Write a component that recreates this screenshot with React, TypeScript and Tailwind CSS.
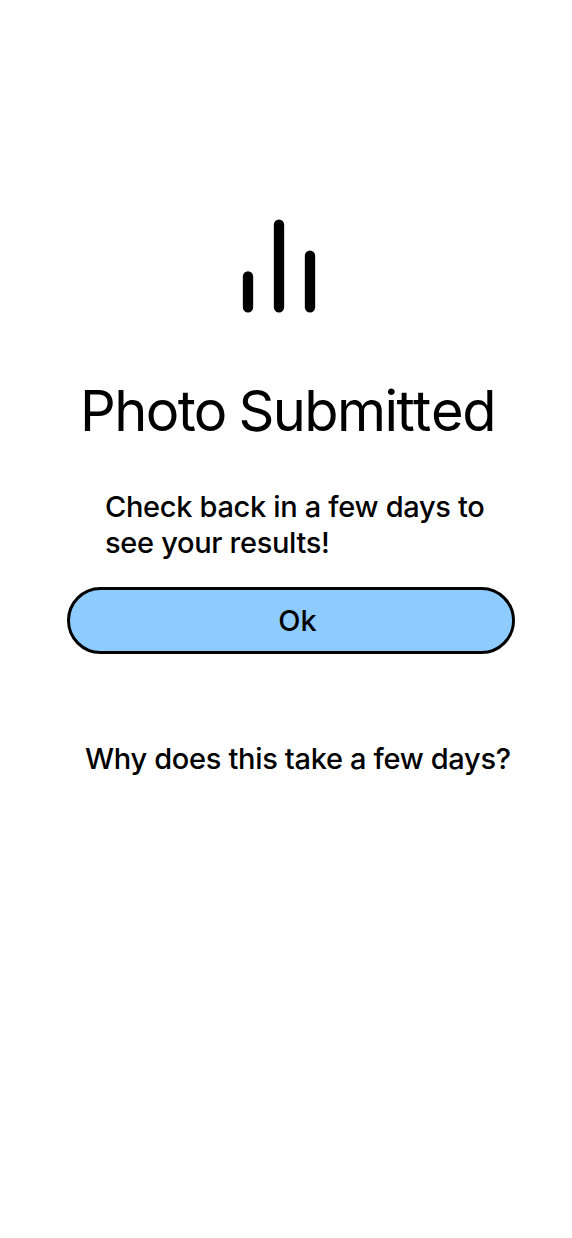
export default function App() {
  return (
    <main className="flex h-[1238px] w-[572px] flex-col items-start bg-white font-['Inter',sans-serif] text-black">
      <svg className="mt-[204px] ml-[217px] size-[124px] shrink-0" viewBox="0 0 24 24" fill="none" stroke="currentColor" strokeWidth="2" strokeLinecap="round">
        <path d="M6 20v-6M12 20V4M18 20V10" />
      </svg>
      <h1 className="mt-[49px] ml-[80px] text-[56px] leading-[68px] tracking-[-1.6px] [word-spacing:-1.5px] whitespace-nowrap">
        Photo Submi<span className="tracking-[-0.3px]">tt</span>ed
      </h1>
      <p className="mt-[44px] ml-[105px] text-[29px] leading-[36px] font-medium tracking-[-0.32px] whitespace-nowrap">
        Check back in a few days to<br />see your results!
      </p>
      <button className="mt-[26px] ml-[67px] h-[67px] w-[448px] rounded-full border-[3px] border-black bg-[#8eccff] pl-[13px] text-[29px] font-medium">Ok</button>
      <a className="mt-[87px] ml-[85px] text-[29px] leading-[36px] font-medium tracking-[-0.28px] [word-spacing:-0.2px] whitespace-nowrap">Why does this take a few days?</a>
    </main>
  );
}
